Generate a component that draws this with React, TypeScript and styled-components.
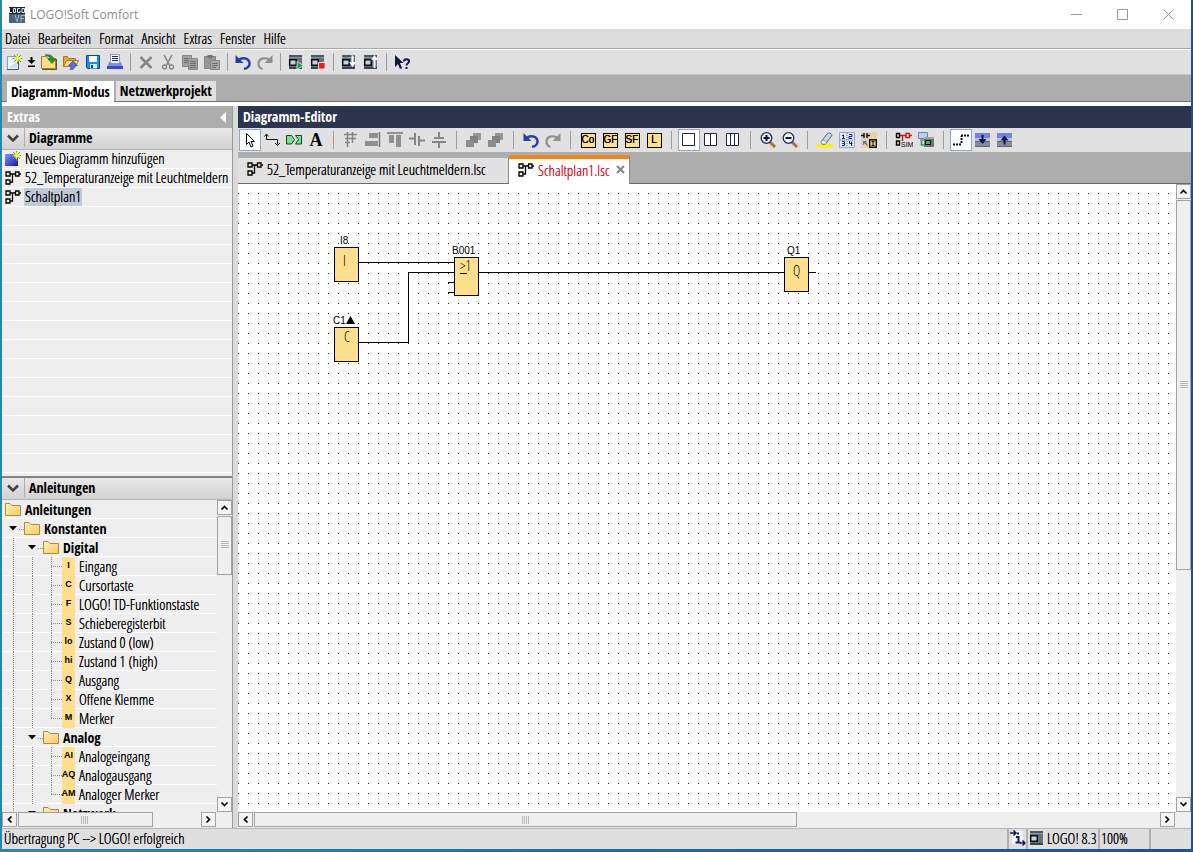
import React from "react";
import styled, { createGlobalStyle, css } from "styled-components";

const regular = `"Open Sans Condensed Light", "Roboto Condensed", "Noto Sans", sans-serif`;
const strong = `"Open Sans Condensed", "Roboto Condensed", "Noto Sans", sans-serif`;

const boldText = css`
  font-family: ${strong};
  font-size: 14px;
  font-weight: bold;
  text-shadow: none;
`;

const GlobalStyle = createGlobalStyle`
  * { box-sizing: border-box; }
  body { margin: 0; background: #fff; }
  button { font: inherit; color: inherit; text-shadow: inherit; border: 0; padding: 0; margin: 0; background: none; }
  ul { list-style: none; margin: 0; padding: 0; }
  h2 { margin: 0; ${boldText} }
  svg { display: block; flex: none; }
`;

/* ---------- window frame ---------- */

const Window = styled.div`
  display: flex;
  flex-direction: column;
  height: 100vh;
  min-height: 640px;
  padding: 0 2px 3px;
  background: linear-gradient(90deg, #2a86ab 0%, #0c86b8 25%, #1565a8 65%, #1c4f9e 100%);
  font: 15px/18px ${regular};
  text-shadow: 0 0 0 currentColor;
  color: #000;
`;

const TitleBar = styled.header`
  display: flex;
  align-items: center;
  height: 29px;
  flex: none;
  background: #fff;
  padding-left: 7px;
`;

const Title = styled.span`
  flex: 1;
  padding-left: 5px;
  font: 12px/16px "Open Sans", sans-serif;
  text-shadow: none;
  color: #8d8d8d;
`;

const WindowButton = styled.button`
  width: 46px;
  height: 28px;
  display: grid;
  place-items: center;
`;

const MenuBar = styled.nav`
  display: flex;
  align-items: center;
  gap: 8px;
  height: 20px;
  flex: none;
  padding: 0 3px 2px;
  background: #dcdcdc;
  border-bottom: 1px solid #a8a8a8;
`;

const MainToolbar = styled.div`
  display: flex;
  align-items: center;
  height: 26px;
  flex: none;
  padding-left: 1px;
  background: #e1e1e1;
  border-top: 1px solid #fff;
  border-bottom: 1px solid #c4c4c4;
`;

const ToolButton = styled.button<{ $active?: boolean; $narrow?: boolean }>`
  display: grid;
  place-items: center;
  width: ${(p) => (p.$narrow ? 13 : 22)}px;
  height: 22px;
  flex: none;
  text-shadow: none;
  ${(p) =>
    p.$active &&
    css`
      background: #fff;
      border: 1px solid #93a7bd;
    `}
`;

const Separator = styled.span<{ $wide?: boolean }>`
  width: 1px;
  height: 18px;
  margin: 0 ${(p) => (p.$wide ? 6 : 4)}px;
  background: #9c9c9c;
  flex: none;
`;

const ModeStrip = styled.div`
  display: flex;
  align-items: flex-end;
  gap: 2px;
  height: 27px;
  flex: none;
  padding: 0 5px;
  background: #adadad;
  border-bottom: 1px solid #6e6e6e;
`;

const ModeTab = styled.button<{ $active?: boolean }>`
  height: ${(p) => (p.$active ? 21 : 20)}px;
  margin-bottom: ${(p) => (p.$active ? -1 : 0)}px;
  padding: 0 4px;
  ${boldText}
  background: ${(p) => (p.$active ? "#fff" : "#e1e1e1")};
`;

const Workspace = styled.main`
  display: flex;
  flex: 1;
  min-height: 0;
  gap: 5px;
  padding-top: 4px;
  background: linear-gradient(#fff 4px, #dadada 4px);
`;

/* ---------- left side ---------- */

const Sidebar = styled.aside`
  display: flex;
  flex-direction: column;
  width: 231px;
  flex: none;
  background: #eee;
  border-right: 1px solid #9a9a9a;
`;

const PanelTitle = styled.div<{ $dark?: boolean }>`
  display: flex;
  align-items: center;
  justify-content: space-between;
  height: 22px;
  flex: none;
  padding: 0 6px 0 5px;
  color: #fff;
  background: ${(p) => (p.$dark ? "#2d344e" : "#adadad")};
`;

const Section = styled.section<{ $fixed?: boolean }>`
  display: flex;
  flex-direction: column;
  min-height: 0;
  flex: ${(p) => (p.$fixed ? "0 0 352px" : "1")};
  ${(p) => p.$fixed && "border-top: 2px solid #838383;"}
`;

const SectionHead = styled.div`
  display: flex;
  align-items: center;
  height: 22px;
  flex: none;
  padding-bottom: 2px;
  background: linear-gradient(#e8e8e8, #d2d2d2);
  border-bottom: 1px solid #b4b4b4;
`;

const Collapse = styled.button`
  width: 23px;
  height: 19px;
  margin-right: 4px;
  display: grid;
  place-items: center;
  border-right: 1px solid #adadad;
`;

const striped = css`
  background: repeating-linear-gradient(#eeeeee 0 18px, #ffffff 18px 19px);
`;

const DiagramList = styled.ul`
  flex: 1;
  overflow: hidden;
  ${striped}
`;

const DiagramRow = styled.li`
  height: 19px;
  padding-left: 3px;
`;

const DiagramButton = styled.button`
  display: flex;
  align-items: center;
  gap: 3px;
  height: 18px;
  white-space: nowrap;
`;

const DiagramName = styled.span<{ $selected?: boolean }>`
  height: 18px;
  padding: 0 1px;
  line-height: 16px;
  background: ${(p) => (p.$selected ? "#c1c9d4" : "transparent")};
`;

const TreeArea = styled.div`
  display: flex;
  flex: 1;
  min-height: 0;
`;

const Tree = styled.ul`
  flex: 1;
  overflow: hidden;
  ${striped}
`;

const TreeRow = styled.li<{ $root?: boolean }>`
  display: flex;
  align-items: center;
  height: 19px;
  padding-left: ${(p) => (p.$root ? 3 : 0)}px;
  white-space: nowrap;
`;

const dotsDown = "repeating-linear-gradient(#8a8a8a 0 1px, transparent 1px 2px)";
const dotsAcross = "repeating-linear-gradient(90deg, #8a8a8a 0 1px, transparent 1px 2px)";

const Guide = styled.span`
  width: 19px;
  height: 19px;
  background: ${dotsDown} 11px 0 / 1px 100% no-repeat;
`;

const Branch = styled.span<{ $last?: boolean }>`
  width: 22px;
  height: 19px;
  background: ${dotsDown} 11px 0 / 1px ${(p) => (p.$last ? "10px" : "100%")} no-repeat,
    ${dotsAcross} 11px 9px / 11px 1px no-repeat;
`;

const Toggle = styled.button`
  width: 22px;
  height: 18px;
  padding-left: 7px;
  background: ${dotsAcross} 17px 9px / 5px 1px no-repeat;
`;

const Tile = styled.span`
  width: 13px;
  height: 19px;
  background: #fedf8e;
  font: bold 9px/16px "Liberation Sans", sans-serif;
  text-shadow: none;
  display: flex;
  justify-content: center;
`;

const TreeLabel = styled.span<{ $bold?: boolean }>`
  height: 18px;
  padding-left: 4px;
  line-height: ${(p) => (p.$bold ? 18 : 16)}px;
  ${(p) => p.$bold && boldText}
`;

/* ---------- scroll bars ---------- */

const ScrollTrack = styled.div<{ $vertical?: boolean }>`
  display: flex;
  flex: none;
  gap: 1px;
  background: #efefef;
  ${(p) => (p.$vertical ? "flex-direction: column; width: 15px;" : "height: 16px;")}
`;

const ScrollArrow = styled.button`
  width: 15px;
  height: 15px;
  flex: none;
  display: grid;
  place-items: center;
  background: #f4f4f4;
  border: 1px solid #a2a2a2;
`;

const Thumb = styled.span<{ $vertical?: boolean; $share: number }>`
  ${(p) => (p.$vertical ? `height: ${p.$share}%;` : `width: ${p.$share}%; height: 15px;`)}
  display: grid;
  place-items: center;
  background: #f0f0f0;
  border: 1px solid #a2a2a2;
`;

const Rail = styled.span<{ $vertical?: boolean }>`
  display: flex;
  flex: 1;
  min-width: 0;
  min-height: 0;
  flex-direction: ${(p) => (p.$vertical ? "column" : "row")};
`;

const Corner = styled.span`
  width: 15px;
`;

/* ---------- editor ---------- */

const Editor = styled.section`
  display: flex;
  flex-direction: column;
  flex: 1;
  min-width: 0;
  background: #fff;
`;

const EditorToolbar = styled.div`
  display: flex;
  align-items: center;
  height: 24px;
  flex: none;
  padding-left: 1px;
  background: #e1e1e1;
`;

const TabStrip = styled.div`
  display: flex;
  align-items: flex-end;
  height: 32px;
  flex: none;
  background: #adadad;
  border-bottom: 1px solid #6a6a6a;
`;

const FileTab = styled.div<{ $active?: boolean }>`
  display: flex;
  align-items: center;
  height: ${(p) => (p.$active ? 29 : 25)}px;
  padding: 0 4px 4px 9px;
  white-space: nowrap;
  ${(p) =>
    p.$active
      ? css`
          width: 121px;
          justify-content: space-between;
          margin-bottom: -1px;
          background: #fff;
          border-top: 4px solid #f08519;
          border-right: 1px solid #8a8a8a;
          color: #dc1428;
        `
      : css`
          width: 271px;
          background: #e1e1e1;
          border-right: 1px solid #8a8a8a;
        `}
`;

const TabName = styled.button`
  display: flex;
  align-items: center;
  gap: 4px;
`;

const CanvasArea = styled.div`
  display: flex;
  flex: 1;
  min-height: 0;
`;

const Canvas = styled.div`
  flex: 1;
  min-width: 0;
  overflow: hidden;
  text-shadow: none;
  background: conic-gradient(from 0deg at 1px 1px, #fff 75%, #222 75%) 0 9px / 10px 10px;
`;

/* ---------- status bar ---------- */

const StatusBar = styled.footer`
  display: flex;
  height: 21px;
  flex: none;
  line-height: 18px;
  background: #dfdfdf;
  border-top: 1px solid #b5b5b5;
`;

const StatusText = styled.span`
  flex: 1;
  padding-left: 2px;
`;

const StatusCell = styled.span<{ $width: number }>`
  display: flex;
  align-items: center;
  gap: 4px;
  width: ${(p) => p.$width}px;
  padding: 0 0 2px 1px;
  border-left: 2px solid #b0b0b0;
  white-space: nowrap;
`;

/* ---------- icons ---------- */

const Svg = ({ children, w = 16, h = 16 }: { children: React.ReactNode; w?: number; h?: number }) => (
  <svg width={w} height={h} viewBox={`0 0 ${w} ${h}`} fill="none" aria-hidden="true">
    {children}
  </svg>
);

const Star = () => (
  <g>
    <path d="M11.500 0v10M6.500 4.500h10M8 1l7 7M15 1L8 8" stroke="#7f9a12" />
    <path d="M11.500 1.500v6M8.500 4.500h6" stroke="#f4ff3c" strokeWidth="2" />
  </g>
);

const AppIcon = () => (
  <Svg>
    <rect width="16" height="16" fill="#4b6478" />
    <path d="M0 0h16v7H0z" fill="#1b2630" />
    <path d="M.5 1v4.500H3M4.500 1.500h2v4h-2zM11 1.500H8.500v4H11v-2M13 1.500h2.500v4H13z" stroke="#e3edf3" />
    <path d="M6 8l2 6.500L10 8M12 15V8.500h4M12 11.500h3" stroke="#9fb4c2" />
  </Svg>
);
const NewIcon = () => (
  <Svg>
    <path d="M1.500 2.500h11v13h-11z" fill="#f1f5fd" stroke="#8b9cc8" />
    <path d="M12.500 7v8.500H1" stroke="#3d508c" />
    <path d="M3 13L11 8v6H3z" fill="#cfdaf4" />
    <Star />
  </Svg>
);
const MoreIcon = () => (
  <Svg w={9} h={12}>
    <path d="M3.500 1h2v3H8.500l-4 4-4-4h3zM1 9.500h7V11H1z" fill="#000" />
  </Svg>
);
const OpenIcon = () => (
  <Svg>
    <path d="M.5 14.500v-12h5l1 2h8v10z" fill="#ffdf85" stroke="#a3802c" />
    <path d="M1 15.500h14.500V5" stroke="#6b5518" />
    <path d="M4 1c5-1 8 1 8.500 4H15l-4 4.500L7 5h2.500C9 3 7 2 4 1z" fill="#279a32" stroke="#0e5c1b" strokeWidth=".6" />
  </Svg>
);
const UploadIcon = () => (
  <Svg>
    <path d="M.5 12.500v-10h4l1 2h7v3" fill="#e9a93a" stroke="#a3762a" />
    <path d="M.5 12.500l3-6h12l-3 6z" fill="#ffd980" stroke="#a3762a" />
    <path d="M10 7l4.500 4.500H12c0 3-2 4.500-5.500 4.500C8 15 8 14 7.800 11.500H5.500z" fill="#5a70e0" stroke="#27389c" strokeWidth=".6" />
  </Svg>
);
const SaveIcon = () => (
  <Svg>
    <path d="M1.500 1.500h13v13h-12l-1-1z" fill="#1c8ae6" stroke="#0b3f9c" />
    <path d="M4 2h8v6H4z" fill="#f5faff" />
    <path d="M5 10h7v4.500H5z" fill="#d9ecfb" />
    <path d="M6 11h2v3H6z" fill="#0b3f9c" />
  </Svg>
);
const PrintIcon = () => (
  <Svg>
    <path d="M3.500.5h9v9h-9z" fill="#f8f9ff" stroke="#8f99c8" />
    <path d="M5 2.500h6M5 4.500h6M5 6.500h6" stroke="#26285c" />
    <path d="M2 8h1.500v1h9V8H14l2 6H0z" fill="#7d8df5" />
    <path d="M0 12h16v3H0z" fill="#3a49c8" />
  </Svg>
);
const DeleteIcon = () => (
  <Svg>
    <path d="M2.500 3l11 11M13.500 3l-11 11" stroke="#858585" strokeWidth="2.500" />
  </Svg>
);
const CutIcon = () => (
  <Svg>
    <path d="M4 1l6 11M12 1L6 12" stroke="#858585" strokeWidth="1.500" />
    <circle cx="4.500" cy="13" r="2" stroke="#858585" strokeWidth="1.300" />
    <circle cx="11.500" cy="13" r="2" stroke="#858585" strokeWidth="1.300" />
  </Svg>
);
const CopyIcon = () => (
  <Svg>
    <path d="M.5 1.500h9v11h-9z" fill="#a2a2a2" stroke="#868686" />
    <path d="M6.500 4.500h9v11h-9z" fill="#a2a2a2" stroke="#868686" />
    <path d="M2 4.500h4M2 6.500h4M2 8.500h4M8 7.500h6M8 9.500h6M8 11.500h6M8 13.500h6" stroke="#6d6d6d" />
  </Svg>
);
const PasteIcon = () => (
  <Svg>
    <path d="M.5 2.500h11v12H.5z" fill="#979797" stroke="#868686" />
    <path d="M3.500 1h5v3h-5z" fill="#777" />
    <path d="M6.500 6.500h9v9h-9z" fill="#ababab" stroke="#868686" />
    <path d="M8 9.500h6M8 11.500h6M8 13.500h4" stroke="#6d6d6d" />
  </Svg>
);
const UndoIcon = () => (
  <Svg>
    <path d="M4 5.500c5-2.500 10-1 10.500 3.500.2 3-2 5-5.500 6" stroke="#2a3cb4" strokeWidth="2.400" />
    <path d="M.5 1v8h8z" fill="#2a3cb4" />
  </Svg>
);
const RedoIcon = () => (
  <Svg>
    <path d="M12 5.500C7 3 2 4.500 1.500 9c-.2 3 1 5 4 6" stroke="#909090" strokeWidth="2.200" />
    <path d="M15.500 1v8h-8z" fill="#909090" />
  </Svg>
);

const Device = () => (
  <g>
    <rect x="1" y="1" width="13" height="14" fill="#66717d" />
    <path d="M1 1h13v2H1z" fill="#4d5864" />
    <path d="M1 3h13v1H1z" fill="#8b959e" />
    <path d="M1.700 5.700h6.600v5.600H1.700z" fill="#c9d0d6" stroke="#0a0d12" strokeWidth="1.500" />
    <path d="M1 13h13v2H1z" fill="#3a434d" />
  </g>
);
const StartIcon = () => (
  <Svg>
    <Device />
    <path d="M9 7.500l6.500 4L9 15.500z" fill="#12a24b" stroke="#e9fff0" strokeWidth=".8" />
  </Svg>
);
const StopIcon = () => (
  <Svg>
    <Device />
    <path d="M8.500 8.500h6.500V15H8.500z" fill="#ee1c25" stroke="#fff" strokeWidth=".8" />
  </Svg>
);
const ToDeviceIcon = () => (
  <Svg>
    <Device />
    <path d="M10.500 1.500h2V8H15l-3.500 5L8 8h2.500z" fill="#fff" />
  </Svg>
);
const FromDeviceIcon = () => (
  <Svg>
    <Device />
    <path d="M10.500 14V6H8l3.500-5L15 6h-2.500v8z" fill="#fff" />
  </Svg>
);
const HelpIcon = () => (
  <Svg>
    <path d="M1 1v12l3-3 2 5 2-1-2-5h3.500z" fill="#10163f" />
    <path d="M10 7.500c0-3 5-3 5 0 0 2-2.500 1.500-2.500 4M12.500 13v2" stroke="#10163f" strokeWidth="2" />
  </Svg>
);

const DiagramIcon = () => (
  <Svg>
    <path d="M5 4h5.500M7.500 4v8H5" stroke="#000" strokeWidth="1.300" />
    <path d="M1 2h4v4H1zM1 10h4v4H1zM10.500 2h3.500v4h-3.500zM14 4h2" fill="#f6e7ba" stroke="#000" strokeWidth="1.300" />
  </Svg>
);
const NewDiagramIcon = () => (
  <Svg>
    <defs>
      <linearGradient id="blueTile" x1="0" y1="0" x2="1" y2="1">
        <stop stopColor="#8296ff" />
        <stop offset="1" stopColor="#1213a6" />
      </linearGradient>
    </defs>
    <rect y="3" width="13" height="12" fill="url(#blueTile)" />
    <Star />
  </Svg>
);
const FolderIcon = () => (
  <Svg>
    <defs>
      <linearGradient id="folderFill" x1="0" y1="0" x2="1" y2="1">
        <stop stopColor="#fff2b8" />
        <stop offset="1" stopColor="#fbc95c" />
      </linearGradient>
    </defs>
    <path d="M.5 13.500v-12h4.500l2 2h8.500v10z" fill="url(#folderFill)" stroke="#a98b45" />
  </Svg>
);
const Caret = () => (
  <Svg w={8} h={5}>
    <path d="M0 0h8L4 4.500z" fill="#000" />
  </Svg>
);
const Chevron = () => (
  <Svg w={12} h={8}>
    <path d="M1 1.500l5 5 5-5" stroke="#444" strokeWidth="2.500" />
  </Svg>
);
const Arrow = ({ turn }: { turn: number }) => (
  <Svg w={9} h={9}>
    <path d="M1.500 6.500l3-3 3 3" stroke="#000" strokeWidth="1.700" transform={`rotate(${turn} 4.500 4.500)`} />
  </Svg>
);
const Grip = ({ vertical }: { vertical?: boolean }) => (
  <Svg w={8} h={8}>
    <path d={vertical ? "M0 .5h8M0 2.500h8M0 4.500h8M0 6.500h8" : "M.5 0v8M2.500 0v8M4.500 0v8M6.500 0v8"} stroke="#b9b9b9" />
  </Svg>
);

const PointerIcon = () => (
  <Svg>
    <path d="M4.500 1.500v11l2.500-2.500 2 5 2-1-2-4.500h3.500z" fill="#fff" stroke="#000" />
  </Svg>
);
const ConnectorIcon = () => (
  <Svg>
    <path d="M2.500 7.500v-5M2.500 7.500h11v5M.5 4.500l2-2.500 2 2.500M11 11l2.500 2.500L16 11" stroke="#111" />
  </Svg>
);
const CutConnectorIcon = () => (
  <Svg>
    <path d="M.5 3.500h5l3 4-3 4.500h-5zM15.500 3.500h-6l3 4-3 4.500h6z" fill="#7fdc9a" stroke="#0c4a1c" />
  </Svg>
);
const Letter = styled.span`
  font: bold 18px/18px "Liberation Serif", serif;
`;
const AlignGridIcon = () => (
  <Svg>
    <path d="M1 2.500h13M4.500 0v15M9.500 0v11M2 6.500h11M2 10.500h5" stroke="#858585" strokeWidth="1.500" />
  </Svg>
);
const AlignRightIcon = () => (
  <Svg>
    <path d="M4 1h9v5H4zM0 9h13v5H0z" fill="#909090" />
    <path d="M14.500 0v15" stroke="#777" strokeWidth="1.500" />
  </Svg>
);
const AlignTopIcon = () => (
  <Svg>
    <path d="M2 3h5v8H2zM9 3h5v12H9z" fill="#909090" />
    <path d="M0 1h16" stroke="#777" strokeWidth="1.500" />
  </Svg>
);
const SpreadHIcon = () => (
  <Svg>
    <path d="M6 1v12M10 4v10M0 6.500h6M10 8.500h6" stroke="#858585" strokeWidth="2" />
  </Svg>
);
const SpreadVIcon = () => (
  <Svg>
    <path d="M3 6h10M1 10h14M8 0v6M8 10v6" stroke="#858585" strokeWidth="2" />
  </Svg>
);
const LayersIcon = () => (
  <Svg>
    <path d="M7 1h8v7H7z" fill="#969696" />
    <path d="M4 4h8v7H4z" fill="#808080" />
    <path d="M0 8h8v7H0z" fill="#8c8c8c" />
  </Svg>
);
const Catalog = styled.span`
  display: grid;
  place-items: center;
  width: 15px;
  height: 15px;
  background: #fedf8e;
  border: 1px solid #000;
  font: 10px/12px "Liberation Sans", sans-serif;
  text-shadow: 0 0 0 #000;
`;
const PanesIcon = ({ count }: { count: number }) => (
  <Svg>
    <path
      d={"M1.500 1.500h12v12h-12z" + (count === 2 ? "M7.500 1.500v12" : "") + (count === 3 ? "M5.500 1.500v12M9.500 1.500v12" : "")}
      fill="#fff"
      stroke="#1c2458"
    />
  </Svg>
);
const ZoomIcon = ({ plus }: { plus?: boolean }) => (
  <Svg>
    <path d="M10 10l5 5" stroke="#a17834" strokeWidth="3" />
    <circle cx="6.500" cy="6" r="5.300" fill="#f0f5ff" stroke="#232a5c" strokeWidth="1.300" />
    <path d={plus ? "M3.500 6h6M6.500 3v6" : "M3.500 6h6"} stroke="#0c1150" strokeWidth="2" />
  </Svg>
);
const HighlightIcon = () => (
  <Svg>
    <path d="M0 12h16v3.500H0z" fill="#fff200" />
    <path d="M4 10l6-8c1.500-2 6-.5 4.500 2l-6 8H5z" fill="#c5d8ea" stroke="#4c6276" />
    <path d="M4 10.500L6 8l4 2-1.500 2H5z" fill="#fff" stroke="#6a7f92" strokeWidth=".7" />
  </Svg>
);
const NumbersIcon = () => (
  <Svg>
    <path d="M.5.5h15v15H.5z" fill="#e4e9ff" stroke="#98a4d4" />
    <path d="M4.500 2.500V7M3 6.500h3M3 3.500h1.500M10 2.500h3v2h-3v2h3M3 9.500h2.500v2H3.500h2v2H3M10.500 9v2.500h3M12.500 9.500V14" stroke="#15225c" />
    <path d="M8 1v14M1 8h14" stroke="#5a68a4" strokeDasharray="1 1" />
  </Svg>
);
const ConvertIcon = () => (
  <Svg>
    <path d="M0 0h16v16H0z" fill="#f2d58c" />
    <path d="M0 16V0h16z" fill="#d9d2bc" />
    <path d="M0 3.500h2.500M3 1v5M6 1v5M6.500 3.500H9" stroke="#111" strokeWidth="1.400" />
    <path d="M8.700 7.700h6.600v7.600H8.700z" stroke="#111" strokeWidth="1.400" />
    <path d="M10.500 9.500h3M12 9.500v4M10.500 13.500h3" stroke="#111" />
    <path d="M2 9h4L5 10.500 7 13l-1 1-2-2.500L2 13z" fill="#6d6bb4" />
  </Svg>
);
const SimIcon = () => (
  <Svg w={18} h={18}>
    <path d="M4 4.500h7M7.500 4.500V10" stroke="#c3131c" strokeWidth="1.400" />
    <path d="M11 2.500h3.500v4H11zM14.500 4.500H17" fill="#fbe3e3" stroke="#c3131c" strokeWidth="1.400" />
    <path d="M1.500 2.500h3v4h-3zM1.500 10h3v4h-3z" fill="#f6e7ba" stroke="#000" strokeWidth="1.400" />
    <text x="6" y="16" fontFamily="Liberation Sans" fontSize="7" fill="#000">SIM</text>
  </Svg>
);
const OnlineIcon = () => (
  <Svg>
    <path d="M.5.5h9v6h-9z" fill="#b8cdea" stroke="#7386a8" />
    <path d="M2 8h7" stroke="#8a97b0" strokeWidth="2" />
    <path d="M6 5h10v10H6z" fill="#6a757f" />
    <path d="M6 5h10v2H6z" fill="#9aa5ae" />
    <path d="M7.500 8.500h5v4h-5z" fill="#2fbf5a" stroke="#000" />
    <path d="M3.500 9v4H6" stroke="#1b9c46" strokeWidth="1.500" />
  </Svg>
);
const WireIcon = () => (
  <Svg>
    <path d="M0 12.500h8M8.500 11V4M8 3.500h8" stroke="#111" strokeWidth="2" strokeDasharray="2 1" />
  </Svg>
);
const StackIcon = ({ up }: { up?: boolean }) => (
  <Svg>
    <path d="M0 1h15v5H0z" fill="#7183e4" />
    <path d="M0 6h15v3H0z" fill="#bcc3d8" />
    <path d="M0 10h15v5H0z" fill="#888c98" />
    <path d="M0 9.500h15M0 14.500h15" stroke="#5d6478" />
    <path d={up ? "M6.500 12.500V8.500H3.500l4-5 4 5h-3v4z" : "M6.500 3v4H3.500l4 5 4-5h-3V3z"} fill="#0c1550" />
  </Svg>
);
const InfoIcon = () => (
  <Svg w={16} h={17}>
    <path d="M2 1h11v13H2z" fill="#f3f5ff" />
    <path d="M0 3h5M3.500.5L6 3 3.500 5.500M10 13h5M12.500 10.500L15 13l-2.500 2.500" stroke="#10185e" strokeWidth="1.500" />
    <path d="M8 2.500v2M6 7h2.500v5M5.500 12.500h5" stroke="#10185e" strokeWidth="2" />
  </Svg>
);

/* ---------- data ---------- */

type Tool = { label: string; icon: React.ReactNode; active?: boolean; narrow?: boolean };

const mainTools: Tool[][] = [
  [
    { label: "Neu", icon: <NewIcon /> },
    { label: "Neu Auswahl", icon: <MoreIcon />, narrow: true },
    { label: "Öffnen", icon: <OpenIcon /> },
    { label: "Schließen", icon: <UploadIcon /> },
    { label: "Speichern", icon: <SaveIcon /> },
    { label: "Drucken", icon: <PrintIcon /> },
  ],
  [
    { label: "Löschen", icon: <DeleteIcon /> },
    { label: "Ausschneiden", icon: <CutIcon /> },
    { label: "Kopieren", icon: <CopyIcon /> },
    { label: "Einfügen", icon: <PasteIcon /> },
  ],
  [
    { label: "Rückgängig", icon: <UndoIcon /> },
    { label: "Wiederherstellen", icon: <RedoIcon /> },
  ],
  [
    { label: "LOGO! starten", icon: <StartIcon /> },
    { label: "LOGO! anhalten", icon: <StopIcon /> },
  ],
  [
    { label: "PC -> LOGO!", icon: <ToDeviceIcon /> },
    { label: "LOGO! -> PC", icon: <FromDeviceIcon /> },
  ],
  [{ label: "Kontexthilfe", icon: <HelpIcon /> }],
];

const editorTools: Tool[][] = [
  [
    { label: "Selektion", icon: <PointerIcon />, active: true },
    { label: "Verbinder", icon: <ConnectorIcon /> },
    { label: "Verbindung auftrennen", icon: <CutConnectorIcon /> },
    { label: "Textwerkzeug", icon: <Letter>A</Letter> },
  ],
  [
    { label: "Am Raster ausrichten", icon: <AlignGridIcon /> },
    { label: "Rechts ausrichten", icon: <AlignRightIcon /> },
    { label: "Oben ausrichten", icon: <AlignTopIcon /> },
    { label: "Horizontal verteilen", icon: <SpreadHIcon /> },
    { label: "Vertikal verteilen", icon: <SpreadVIcon /> },
  ],
  [
    { label: "Nach vorne", icon: <LayersIcon /> },
    { label: "Nach hinten", icon: <LayersIcon /> },
  ],
  [
    { label: "Rückgängig", icon: <UndoIcon /> },
    { label: "Wiederherstellen", icon: <RedoIcon /> },
  ],
  [
    { label: "Konstanten", icon: <Catalog>Co</Catalog> },
    { label: "Grundfunktionen", icon: <Catalog>GF</Catalog> },
    { label: "Sonderfunktionen", icon: <Catalog>SF</Catalog> },
    { label: "Datenprotokoll", icon: <Catalog>L</Catalog> },
  ],
  [
    { label: "Ein Fenster", icon: <PanesIcon count={1} />, active: true },
    { label: "Zwei Fenster", icon: <PanesIcon count={2} /> },
    { label: "Drei Fenster", icon: <PanesIcon count={3} /> },
  ],
  [
    { label: "Vergrößern", icon: <ZoomIcon plus /> },
    { label: "Verkleinern", icon: <ZoomIcon /> },
  ],
  [
    { label: "Hervorheben", icon: <HighlightIcon /> },
    { label: "Seitenaufteilung", icon: <NumbersIcon /> },
    { label: "Konvertieren", icon: <ConvertIcon /> },
  ],
  [
    { label: "Simulation", icon: <SimIcon /> },
    { label: "Online-Test", icon: <OnlineIcon /> },
  ],
  [
    { label: "Verbindungslinien", icon: <WireIcon />, active: true },
    { label: "Aufklappen", icon: <StackIcon /> },
    { label: "Zuklappen", icon: <StackIcon up /> },
  ],
];

const tree: { name: string; level: number; tile?: string; last?: boolean }[] = [
  { name: "Anleitungen", level: 0 },
  { name: "Konstanten", level: 1 },
  { name: "Digital", level: 2 },
  { name: "Eingang", level: 3, tile: "I" },
  { name: "Cursortaste", level: 3, tile: "C" },
  { name: "LOGO! TD-Funktionstaste", level: 3, tile: "F" },
  { name: "Schieberegisterbit", level: 3, tile: "S" },
  { name: "Zustand 0 (low)", level: 3, tile: "lo" },
  { name: "Zustand 1 (high)", level: 3, tile: "hi" },
  { name: "Ausgang", level: 3, tile: "Q" },
  { name: "Offene Klemme", level: 3, tile: "X" },
  { name: "Merker", level: 3, tile: "M", last: true },
  { name: "Analog", level: 2 },
  { name: "Analogeingang", level: 3, tile: "AI" },
  { name: "Analogausgang", level: 3, tile: "AQ" },
  { name: "Analoger Merker", level: 3, tile: "AM", last: true },
  { name: "Netzwerk", level: 2 },
];

const Tools = ({ groups, wide }: { groups: Tool[][]; wide?: boolean }) => (
  <>
    {groups.map((group, g) => (
      <React.Fragment key={g}>
        {g > 0 && <Separator $wide={wide} />}
        {group.map((t) => (
          <ToolButton key={t.label} aria-label={t.label} $active={t.active} $narrow={t.narrow}>
            {t.icon}
          </ToolButton>
        ))}
      </React.Fragment>
    ))}
  </>
);

const ScrollBar = ({ vertical, share, corner }: { vertical?: boolean; share: number; corner?: boolean }) => (
  <ScrollTrack $vertical={vertical}>
    <ScrollArrow aria-label={vertical ? "Nach oben" : "Nach links"}>
      <Arrow turn={vertical ? 0 : -90} />
    </ScrollArrow>
    <Rail $vertical={vertical}>
      <Thumb $vertical={vertical} $share={share}>
        <Grip vertical={vertical} />
      </Thumb>
    </Rail>
    <ScrollArrow aria-label={vertical ? "Nach unten" : "Nach rechts"}>
      <Arrow turn={vertical ? 180 : 90} />
    </ScrollArrow>
    {corner && <Corner />}
  </ScrollTrack>
);

const Schematic = () => (
  <svg width="600" height="200" role="img" aria-label="Schaltplan1">
    <g fill="none" stroke="#000" shapeRendering="crispEdges">
      <path d="M120 78.500h96M120 158.500h50.500v-70H216M240 88.500h306M571 88.500h7M210 98.500h6M210 108.500h6" />
      <g fill="#fedf8e">
        <rect x="96.500" y="63.500" width="24" height="34" />
        <rect x="216.500" y="73.500" width="24" height="38" />
        <rect x="96.500" y="143.500" width="24" height="34" />
        <rect x="546.500" y="73.500" width="24" height="34" />
      </g>
      <path d="M222 89.500h7" />
    </g>
    <path d="M108 140l4.500-8 4.500 8z" fill="#000" />
    <g fontFamily="Liberation Sans, sans-serif" fontSize="10" fill="#000">
      <text x="102" y="60">I8</text>
      <text x="214" y="70">B001</text>
      <text x="95" y="140">C1</text>
      <text x="549" y="70">Q1</text>
    </g>
    <g fontFamily='"Open Sans Condensed Light", sans-serif' fontSize="14" fill="#000">
      <text x="105" y="82">I</text>
      <text x="222" y="87">&gt;1</text>
      <text x="106" y="158">C</text>
      <text x="555" y="92">Q</text>
    </g>
  </svg>
);

export default function App() {
  return (
    <Window>
      <GlobalStyle />
      <TitleBar>
        <AppIcon />
        <Title>LOGO!Soft Comfort</Title>
        <WindowButton aria-label="Minimieren">
          <Svg w={11} h={11}><path d="M0 5.500h11" stroke="#999" /></Svg>
        </WindowButton>
        <WindowButton aria-label="Maximieren">
          <Svg w={11} h={11}><path d="M.5.5h10v10H.5z" stroke="#999" /></Svg>
        </WindowButton>
        <WindowButton aria-label="Schließen">
          <Svg w={11} h={11}><path d="M.5.5l10 10M10.500.5l-10 10" stroke="#999" /></Svg>
        </WindowButton>
      </TitleBar>
      <MenuBar>
        {["Datei", "Bearbeiten", "Format", "Ansicht", "Extras", "Fenster", "Hilfe"].map((m) => (
          <button key={m}>{m}</button>
        ))}
      </MenuBar>
      <MainToolbar>
        <Tools groups={mainTools} />
      </MainToolbar>
      <ModeStrip>
        <ModeTab $active>Diagramm-Modus</ModeTab>
        <ModeTab>Netzwerkprojekt</ModeTab>
      </ModeStrip>
      <Workspace>
        <Sidebar>
          <PanelTitle>
            <h2>Extras</h2>
            <button aria-label="Einklappen">
              <Svg w={6} h={11}><path d="M6 0v11L0 5.500z" fill="#fff" /></Svg>
            </button>
          </PanelTitle>
          <Section>
            <SectionHead>
              <Collapse aria-label="Diagramme einklappen"><Chevron /></Collapse>
              <h2>Diagramme</h2>
            </SectionHead>
            <DiagramList>
              <DiagramRow>
                <DiagramButton><NewDiagramIcon /><DiagramName>Neues Diagramm hinzufügen</DiagramName></DiagramButton>
              </DiagramRow>
              <DiagramRow>
                <DiagramButton><DiagramIcon /><DiagramName>52_Temperaturanzeige mit Leuchtmeldern</DiagramName></DiagramButton>
              </DiagramRow>
              <DiagramRow>
                <DiagramButton><DiagramIcon /><DiagramName $selected>Schaltplan1</DiagramName></DiagramButton>
              </DiagramRow>
            </DiagramList>
          </Section>
          <Section $fixed>
            <SectionHead>
              <Collapse aria-label="Anleitungen einklappen"><Chevron /></Collapse>
              <h2>Anleitungen</h2>
            </SectionHead>
            <TreeArea>
              <Tree>
                {tree.map((n) => (
                  <TreeRow key={n.name} $root={n.level === 0}>
                    {n.level > 1 && <Guide />}
                    {n.level > 2 && <Guide />}
                    {n.tile ? (
                      <>
                        <Branch $last={n.last} />
                        <Tile>{n.tile}</Tile>
                      </>
                    ) : (
                      <>
                        {n.level > 0 && <Toggle aria-label={n.name + " einklappen"}><Caret /></Toggle>}
                        <FolderIcon />
                      </>
                    )}
                    <TreeLabel $bold={!n.tile}>{n.name}</TreeLabel>
                  </TreeRow>
                ))}
              </Tree>
              <ScrollBar vertical share={21} />
            </TreeArea>
            <ScrollBar share={74} corner />
          </Section>
        </Sidebar>
        <Editor>
          <PanelTitle $dark>
            <h2>Diagramm-Editor</h2>
          </PanelTitle>
          <EditorToolbar>
            <Tools groups={editorTools} wide />
          </EditorToolbar>
          <TabStrip>
            <FileTab>
              <TabName><DiagramIcon />52_Temperaturanzeige mit Leuchtmeldern.lsc</TabName>
            </FileTab>
            <FileTab $active>
              <TabName><DiagramIcon />Schaltplan1.lsc</TabName>
              <button aria-label="Tab schließen">
                <Svg w={9} h={9}><path d="M1 1l7 7M8 1L1 8" stroke="#858585" strokeWidth="2" /></Svg>
              </button>
            </FileTab>
          </TabStrip>
          <CanvasArea>
            <Canvas>
              <Schematic />
            </Canvas>
            <ScrollBar vertical share={62} />
          </CanvasArea>
          <ScrollBar share={60} corner />
        </Editor>
      </Workspace>
      <StatusBar>
        <StatusText>Übertragung PC --&gt; LOGO! erfolgreich</StatusText>
        <StatusCell $width={19}><InfoIcon /></StatusCell>
        <StatusCell $width={72}>
          <Svg w={14}><Device /></Svg>
          LOGO! 8.3
        </StatusCell>
        <StatusCell $width={51}>100%</StatusCell>
        <StatusCell $width={42} />
      </StatusBar>
    </Window>
  );
}
